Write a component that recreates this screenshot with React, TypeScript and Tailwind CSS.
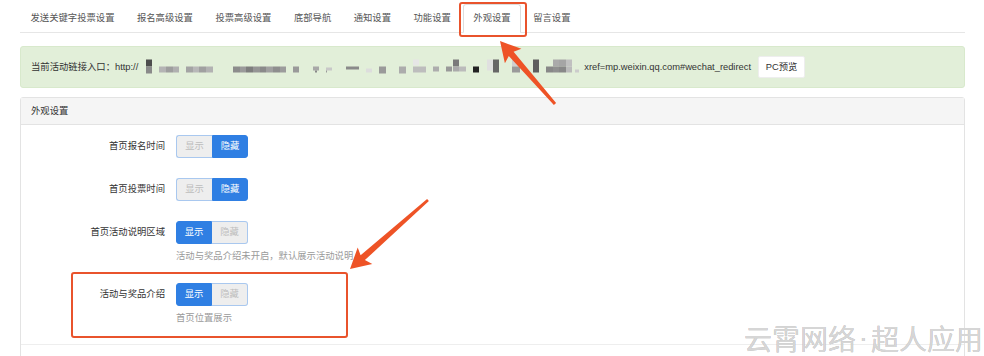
import React from 'react'

const tabs = ['发送关键字投票设置', '报名高级设置', '投票高级设置', '底部导航', '通知设置', '功能设置', '外观设置', '留言设置']

// blurred part of the link, page coordinates: x, y, w, h, colour
const mosaic: [number, number, number, number, string][] = [
  [146, 60, 6, 7, '#4d4d4d'], [146, 67, 6, 7, '#8a8a8a'],
  [159, 67, 7, 6, '#b4b4b4'], [166, 67, 7, 6, '#9e9e9e'], [173, 67, 6, 6, '#b0b0b0'],
  [186, 67, 7, 6, '#a4a4a4'], [193, 67, 6, 6, '#b8b8b8'], [199, 67, 7, 6, '#a0a0a0'], [206, 67, 7, 6, '#b2b2b2'],
  [233, 67, 7, 6, '#8c8c8c'], [240, 67, 6, 6, '#9a9a9a'], [246, 67, 7, 6, '#7e7e7e'], [253, 67, 7, 6, '#959595'],
  [260, 67, 6, 6, '#8a8a8a'], [266, 67, 7, 6, '#a0a0a0'], [273, 67, 7, 6, '#8e8e8e'], [280, 67, 6, 6, '#9c9c9c'],
  [293, 67, 6, 6, '#9a9a9a'],
  [313, 67, 6, 4, '#a8a8a8'], [315, 71, 2, 2, '#888888'],
  [326, 68, 6, 3, '#c8c8c8'], [326, 71, 1, 2, '#999999'],
  [346, 67, 13, 3, '#8a8a8a'],
  [366, 69, 6, 4, '#dddddd'],
  [379, 67, 7, 7, '#9a9a9a'],
  [399, 67, 7, 7, '#acacac'],
  [413, 60, 6, 6, '#e6e6e6'], [413, 67, 13, 6, '#bdbdbd'],
  [433, 67, 6, 5, '#adadad'],
  [446, 67, 6, 5, '#999999'], [453, 60, 6, 7, '#7a7a7a'], [453, 67, 6, 5, '#aaaaaa'], [459, 67, 7, 5, '#bbbbbb'],
  [473, 67, 6, 6, '#222222'],
  [487, 60, 6, 11, '#e0e0e0'], [493, 60, 6, 13, '#666666'],
  [512, 60, 6, 7, '#cfcfcf'], [512, 67, 8, 6, '#9a9a9a'],
  [533, 60, 6, 13, '#5e5e5e'],
  [546, 67, 7, 6, '#888888'], [553, 60, 6, 7, '#aaaaaa'], [553, 67, 6, 6, '#909090'], [559, 60, 7, 7, '#a5a5a5'],
  [559, 67, 7, 6, '#888888'], [566, 60, 6, 7, '#c0c0c0'], [566, 67, 6, 6, '#bbbbbb'],
  [575, 70, 4, 3, '#cccccc'],
]

function arrowPoints(tx: number, ty: number, hx: number, hy: number) {
  const dx = hx - tx, dy = hy - ty
  const len = Math.hypot(dx, dy)
  const ux = dx / len, uy = dy / len
  const nx = -uy, ny = ux
  const neck = 17, barb = 14, headW = 11, neckW = 3.2, tailW = 1.4
  const bx = hx - ux * neck, by = hy - uy * neck
  const cx = hx - ux * barb - ux * 6, cy = hy - uy * barb - uy * 6
  const pts = [
    [tx + nx * tailW, ty + ny * tailW],
    [bx + nx * neckW, by + ny * neckW],
    [cx + nx * headW, cy + ny * headW],
    [hx, hy],
    [cx - nx * headW, cy - ny * headW],
    [bx - nx * neckW, by - ny * neckW],
    [tx - nx * tailW, ty - ny * tailW],
  ]
  return pts.map(p => p.map(v => v.toFixed(1)).join(',')).join(' ')
}

function Toggle({ on }: { on: boolean }) {
  return (
    <div className="flex h-[23px]">
      <div className={`w-[36px] flex items-center justify-center rounded-l-[3px] border ${on ? 'bg-[#2f7fe3] border-[#2f7fe3] text-white' : 'bg-[#eeeeee] border-[#a9c8ef] border-r-0 text-[#bdbdbd]'}`}>显示</div>
      <div className={`w-[36px] flex items-center justify-center rounded-r-[3px] border ${!on ? 'bg-[#2f7fe3] border-[#2f7fe3] text-white' : 'bg-[#eeeeee] border-[#a9c8ef] border-l-0 text-[#bdbdbd]'}`}>隐藏</div>
    </div>
  )
}

function Row({ label, on, help }: { label: string; on: boolean; help?: string }) {
  return (
    <div className="flex">
      <div className="w-[144px] h-[23px] flex items-center justify-end text-[#333]">{label}</div>
      <div className="pl-[11px]">
        <Toggle on={on} />
        {help && <div className="mt-[6px] leading-[13px] text-[#9a9a9a]">{help}</div>}
      </div>
    </div>
  )
}

export default function App() {
  return (
    <div className="relative w-[984px] h-[356px] overflow-hidden bg-white text-[9.33px] leading-[13px] font-['Liberation_Sans','Noto_Sans_CJK_SC',sans-serif]">
      <div className="pl-[20px] pr-[19px]">
        {/* tabs */}
        <div className="pt-[4px] flex border-b border-[#e6e6e6]">
          {tabs.map(t => (
            <div
              key={t}
              className={`h-[29px] -mb-px px-[9.5px] mr-[1.5px] flex items-center border rounded-t-[3px] text-[#555] ${
                t === '外观设置' ? 'bg-white border-[#dddddd] border-b-white' : 'border-transparent'
              }`}
            >
              {t}
            </div>
          ))}
        </div>

        {/* link alert */}
        <div className="mt-[13px] h-[42px] bg-[#e2efd9] border border-[#d8e9cc] rounded-[3px] pl-[10px] flex items-center text-[#333]">
          <span className="whitespace-nowrap">当前活动链接入口：http://</span>
          <svg width="446" height="20" viewBox="138 57.5 446 20" className="shrink-0">
            {mosaic.map(([x, y, w, h, c], i) => (
              <rect key={i} x={x} y={y} width={w} height={h} fill={c} />
            ))}
          </svg>
          <span className="whitespace-nowrap">xref=mp.weixin.qq.com#wechat_redirect</span>
          <div className="ml-[7px] w-[47px] h-[22px] bg-white border border-[#eeeeee] rounded-[2px] flex items-center justify-center">PC预览</div>
        </div>

        {/* panel */}
        <div className="mt-[9px] border border-[#e3e3e3] rounded-t-[3px] h-[300px]">
          <div className="h-[27px] bg-[#f5f5f5] border-b border-[#e3e3e3] pl-[10px] flex items-center text-[#333]">外观设置</div>
          <div className="pt-[10px] flex flex-col gap-[20px]">
            <Row label="首页报名时间" on={false} />
            <Row label="首页投票时间" on={false} />
            <Row label="首页活动说明区域" on={true} help="活动与奖品介绍未开启，默认展示活动说明" />
            <Row label="活动与奖品介绍" on={true} help="首页位置展示" />
          </div>
          <div className="mt-[19px] border-t border-[#eeeeee]" />
        </div>
      </div>

      {/* annotations */}
      <div className="absolute left-[459px] top-[2px] w-[68px] h-[35px] border-2 border-[#e9532c] rounded-[3px]" />
      <div className="absolute left-[71px] top-[272px] w-[277px] h-[66px] border-2 border-[#e9532c] rounded-[3px]" />
      <svg className="absolute left-0 top-0" width="984" height="356">
        <polygon points={arrowPoints(555, 104, 500, 41)} fill="#ee5326" />
        <polygon points={arrowPoints(428, 200, 350, 269)} fill="#ee5326" />
      </svg>

      <div className="absolute right-[1px] top-[320px] h-[36px] flex items-center text-[28px] leading-[36px] whitespace-nowrap text-[#d6d6d6] [text-shadow:0_0_0.5px_rgba(0,0,0,0.35)] font-['Noto_Sans_CJK_SC',sans-serif]">
        <span>云霄网络</span>
        <span className="w-[15px] flex justify-center font-['Liberation_Sans',sans-serif]"> · </span>
        <span>超人应用</span>
      </div>
    </div>
  )
}
